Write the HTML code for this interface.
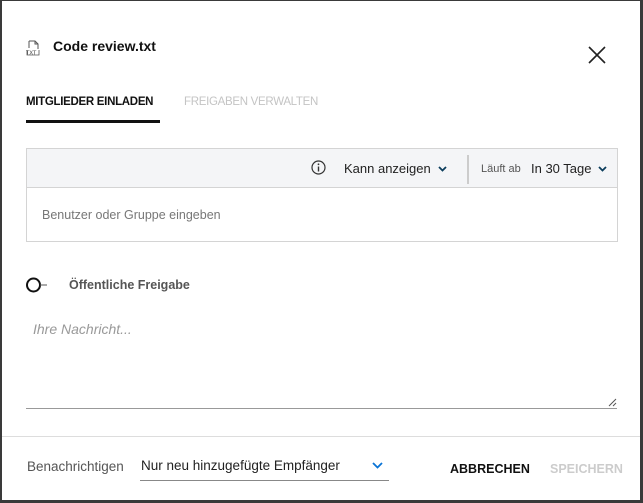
<!DOCTYPE html>
<html><head><meta charset="utf-8"><style>
body{margin:0;width:643px;height:503px;background:#3a3a3a;font-family:"Liberation Sans",sans-serif;overflow:hidden;position:relative}
.d{position:absolute;left:2px;top:1px;width:638px;height:499px;background:#fff}
.a{position:absolute;white-space:nowrap}
</style></head><body>
<div class="d"></div>
<svg class="a" style="left:26px;top:40px" width="14" height="16" viewBox="0 0 14 16"><path d="M3 1h6l3 3v5M3 1v7M9 1v3h3" fill="none" stroke="#555" stroke-width="1"/><text x="0" y="14.5" font-size="5.5" font-family="Liberation Sans" fill="#333">TXT</text><path d="M1 10v5h12v-5" fill="none" stroke="#555" stroke-width=".8"/></svg>
<div class="a" style="left:53px;top:38px;font-size:14px;font-weight:bold;color:#111">Code review.txt</div>
<svg class="a" style="left:588px;top:46px" width="18" height="18"><path d="M1 1L17 17M17 1L1 17" stroke="#222" stroke-width="1.6"/></svg>
<div class="a" style="left:26px;top:96px;font-size:11.5px;font-weight:bold;color:#111;letter-spacing:-.3px">MITGLIEDER EINLADEN</div>
<div class="a" style="left:184px;top:96px;font-size:11.5px;color:#c4c4c4;letter-spacing:-.3px">FREIGABEN VERWALTEN</div>
<div class="a" style="left:26px;top:120px;width:134px;height:3px;background:#111"></div>
<div class="a" style="left:26px;top:148px;width:590px;height:92px;border:1px solid #d4d4d4"></div>
<div class="a" style="left:27px;top:149px;width:590px;height:38px;background:#f4f5f7;border-bottom:1px solid #d4d4d4"></div>
<svg class="a" style="left:311px;top:160px" width="15" height="15"><circle cx="7.5" cy="7.5" r="6.5" fill="none" stroke="#333" stroke-width="1.2"/><path d="M7.5 6.5v5" stroke="#333" stroke-width="1.4"/><circle cx="7.5" cy="4.3" r=".9" fill="#333"/></svg>
<div class="a" style="left:344px;top:161px;font-size:13px;color:#222">Kann anzeigen</div>
<svg class="a" style="left:438px;top:166px" width="9" height="6"><path d="M1 1l3.5 3.5L8 1" fill="none" stroke="#0b3d5c" stroke-width="1.8"/></svg>
<div class="a" style="left:467px;top:155px;width:2px;height:29px;background:#ccc"></div>
<div class="a" style="left:481px;top:163px;font-size:11px;color:#555">Läuft ab</div>
<div class="a" style="left:531px;top:161px;font-size:13px;color:#222">In 30 Tage</div>
<svg class="a" style="left:598px;top:166px" width="9" height="6"><path d="M1 1l3.5 3.5L8 1" fill="none" stroke="#0b3d5c" stroke-width="1.8"/></svg>
<div class="a" style="left:42px;top:208px;font-size:12.5px;color:#777">Benutzer oder Gruppe eingeben</div>
<svg class="a" style="left:25px;top:277px" width="28" height="16"><circle cx="8.5" cy="8" r="6.5" fill="#fff" stroke="#111" stroke-width="2"/><path d="M15 8h7" stroke="#555" stroke-width="1"/></svg>
<div class="a" style="left:69px;top:278px;font-size:12.5px;font-weight:bold;color:#555">Öffentliche Freigabe</div>
<div class="a" style="left:33px;top:321px;font-size:14px;font-style:italic;color:#999">Ihre Nachricht...</div>
<div class="a" style="left:26px;top:408px;width:591px;height:1px;background:#999"></div>
<svg class="a" style="left:608px;top:398px" width="9" height="9"><path d="M1 8L8 1M5 8L8 5" stroke="#555" stroke-width="1"/></svg>
<div class="a" style="left:2px;top:436px;width:638px;height:1px;background:#ddd"></div>
<div class="a" style="left:27px;top:459px;font-size:13.5px;color:#555">Benachrichtigen</div>
<div class="a" style="left:141px;top:458px;font-size:13.5px;color:#222">Nur neu hinzugefügte Empfänger</div>
<svg class="a" style="left:372px;top:462px" width="11" height="7"><path d="M1 1l4.5 4.5L10 1" fill="none" stroke="#0a74d6" stroke-width="1.8"/></svg>
<div class="a" style="left:140px;top:480px;width:249px;height:1px;background:#888"></div>
<div class="a" style="left:450px;top:462px;font-size:12.5px;font-weight:bold;color:#111">ABBRECHEN</div>
<div class="a" style="left:550px;top:462px;font-size:12.5px;font-weight:bold;color:#ccc">SPEICHERN</div>
</body></html>
